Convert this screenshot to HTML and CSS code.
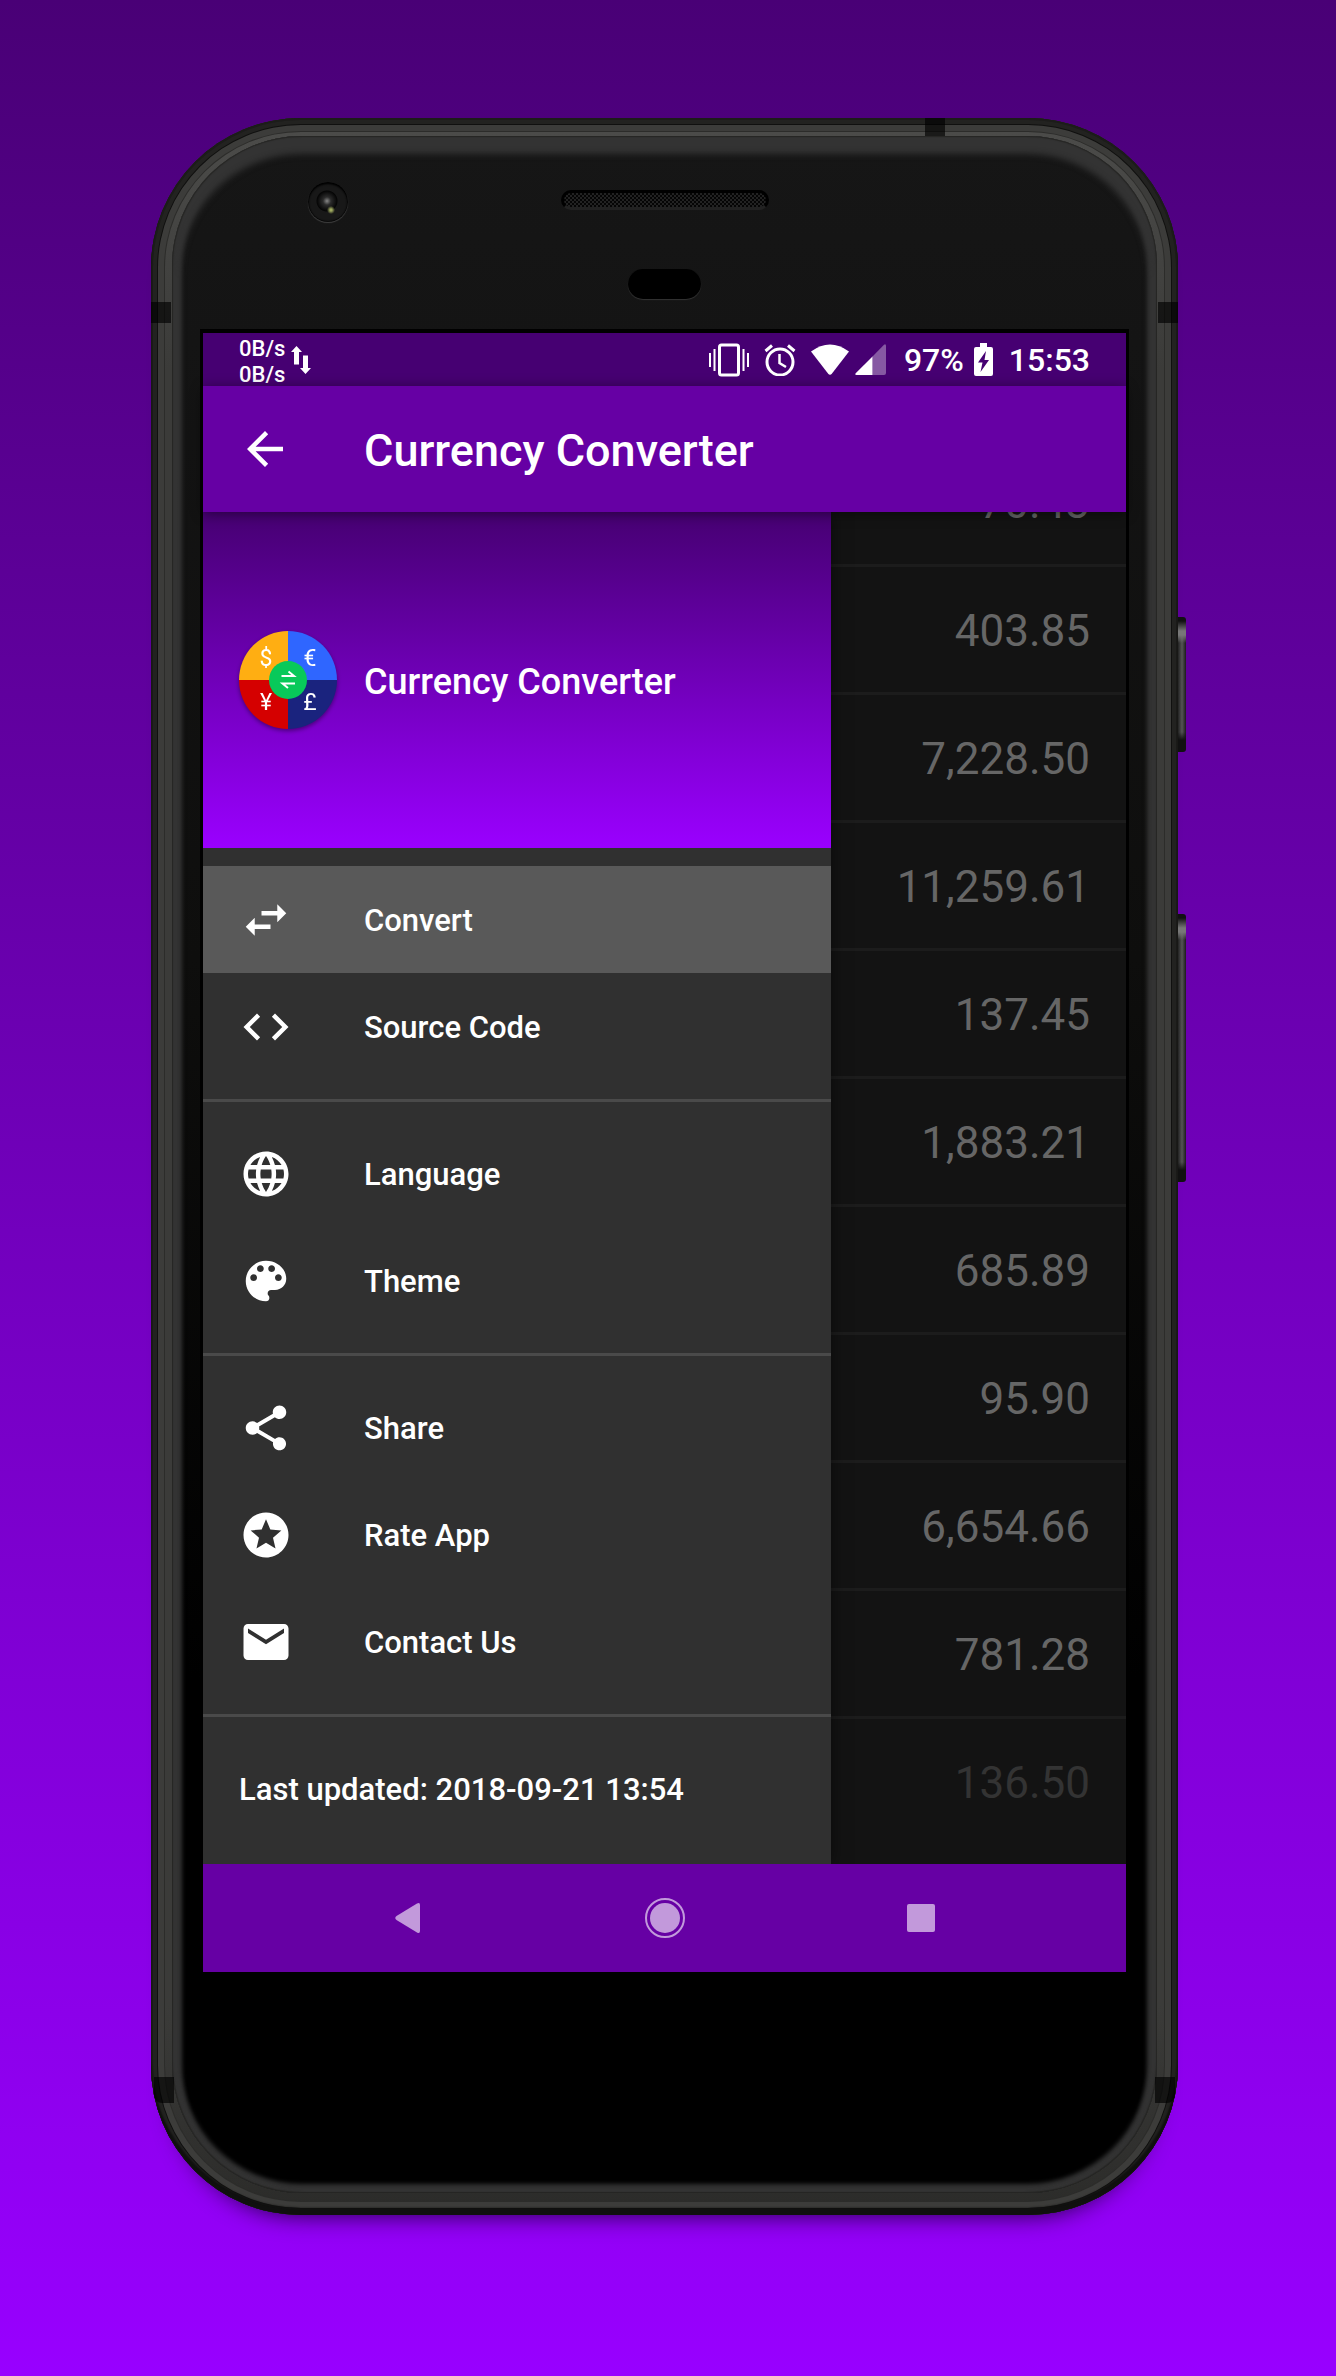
FILE: index.html
```html
<!DOCTYPE html>
<html lang="en">
<head>
<meta charset="utf-8">
<meta name="viewport" content="width=device-width, initial-scale=1">
<title>Currency Converter</title>
<link rel="stylesheet" href="styles.css">
</head>
<body>
<div class="phone">
  <span class="side-key side-key-power"></span>
  <span class="side-key side-key-volume"></span>
  <span class="band band-top"></span>
  <span class="band band-left"></span>
  <span class="band band-right"></span>
  <span class="band band-left band-low"></span>
  <span class="band band-right band-low"></span>
  <div class="face">
    <div class="hardware">
      <span class="camera"></span>
      <span class="speaker"></span>
      <span class="sensor"></span>
    </div>
    <div class="screen">
      <div class="status-bar">
        <div class="traffic">
          <div class="traffic-rates"><span>0B/s</span><span>0B/s</span></div>
          <svg class="traffic-arrows" viewBox="0 0 20 28" aria-hidden="true"><path d="M5.500 0 11 6H8v12.500H3V6H0zM14.500 28 9 22h3V9.500h5V22h3z"/></svg>
        </div>
        <div class="status-icons">
          <svg class="icon-vibrate" viewBox="0 0 40 34" aria-hidden="true"><path d="M1 10v14M5.500 6v22M34.500 6v22M39 10v14" stroke-width="2"/><rect x="10.500" y="2" width="19" height="30" rx="2" stroke-width="3"/></svg>
          <svg class="icon-alarm" viewBox="0 0 32 32" aria-hidden="true"><circle cx="16" cy="18" r="13" stroke-width="3"/><path d="M15.500 10v9l6.500 4" stroke-width="2.500"/><path d="M1.500 7 8 1.500M30.500 7 24 1.500" stroke-width="3"/></svg>
          <svg class="icon-wifi" viewBox="0 0 38 31" aria-hidden="true"><path d="M0 7.500Q19-6.500 38 7.500L21 29.500q-2 2.500-4 0z"/></svg>
          <svg class="icon-signal" viewBox="0 0 31 31" aria-hidden="true"><path d="M29 .700Q31-.500 31 2v27q0 2-2 2H17.500V12.500z" opacity=".35"/><path d="M17.500 12.500V31H1.500Q-.500 31 .700 29.300z"/></svg>
          <span class="battery-level">97%</span>
          <svg class="icon-battery" viewBox="0 0 19 33" aria-hidden="true"><path fill-rule="evenodd" d="M6 0h7v4h4q2 0 2 2v25q0 2-2 2H2q-2 0-2-2V6q0-2 2-2h4zM12 8 4 19.500h4.500L6.500 29 15 17h-4.500z"/></svg>
          <span class="clock">15:53</span>
        </div>
      </div>
      <header class="toolbar">
        <button class="back" type="button" aria-label="Back"><svg class="icon" viewBox="0 0 24 24" aria-hidden="true"><path d="M20 11H7.830l5.590-5.590L12 4l-8 8 8 8 1.410-1.410L7.830 13H20v-2z"/></svg></button>
        <h1 class="title">Currency Converter</h1>
      </header>
      <div class="content">
        <nav class="drawer">
          <div class="drawer-header">
            <svg class="logo" viewBox="0 0 100 100" aria-hidden="true">
              <path d="M50 50V1A49 49 0 0 0 1 50z" fill="#ffae12"/>
              <path d="M50 50V1A49 49 0 0 1 99 50z" fill="#2f66ff"/>
              <path d="M50 50V99A49 49 0 0 1 1 50z" fill="#d50000"/>
              <path d="M50 50V99A49 49 0 0 0 99 50z" fill="#1a237e"/>
              <g class="logo-symbols"><text x="28" y="36">$</text><text x="72" y="36">€</text><text x="28" y="80">¥</text><text x="72" y="80">£</text></g>
              <circle cx="50" cy="50" r="19" fill="#08c95a"/>
              <path d="M43.500 46h12.500l-5.500-4.500M57 53.500H44.500l5.500 4.500" fill="none" stroke="#fff" stroke-width="2"/>
            </svg>
            <span class="drawer-title">Currency Converter</span>
          </div>
          <ul class="menu">
            <li><a class="menu-item menu-item-active" href="#convert"><svg class="icon" viewBox="0 0 24 24" aria-hidden="true"><path d="M6.990 11L3 15l3.990 4v-3H14v-2H6.990v-3zM21 9l-3.990-4v3H10v2h7.010v3L21 9z"/></svg><span class="label">Convert</span></a></li>
            <li><a class="menu-item" href="#source"><svg class="icon" viewBox="0 0 24 24" aria-hidden="true"><path d="M9.400 16.600L4.800 12l4.600-4.600L8 6l-6 6 6 6 1.400-1.400zm5.200 0l4.600-4.600-4.600-4.600L16 6l6 6-6 6-1.400-1.400z"/></svg><span class="label">Source Code</span></a></li>
          </ul>
          <ul class="menu">
            <li><a class="menu-item" href="#language"><svg class="icon" viewBox="0 0 24 24" aria-hidden="true"><path d="M11.990 2C6.470 2 2 6.480 2 12s4.470 10 9.990 10C17.520 22 22 17.520 22 12S17.520 2 11.990 2zm6.930 6h-2.950c-.320-1.250-.780-2.450-1.380-3.560 1.840.630 3.370 1.910 4.330 3.560zM12 4.040c.830 1.200 1.480 2.530 1.910 3.960h-3.820c.430-1.430 1.080-2.760 1.910-3.960zM4.260 14C4.100 13.360 4 12.690 4 12s.100-1.360.260-2h3.380c-.080.660-.140 1.320-.140 2 0 .680.060 1.340.140 2H4.260zm.820 2h2.950c.320 1.250.780 2.450 1.380 3.560-1.840-.630-3.370-1.900-4.330-3.560zm2.950-8H5.080c.960-1.660 2.490-2.930 4.330-3.560C8.810 5.550 8.350 6.750 8.030 8zM12 19.960c-.830-1.200-1.480-2.530-1.910-3.960h3.820c-.430 1.430-1.080 2.760-1.910 3.960zM14.340 14H9.660c-.090-.660-.160-1.320-.160-2 0-.680.070-1.350.160-2h4.680c.090.650.160 1.320.160 2 0 .680-.070 1.340-.160 2zm.250 5.560c.600-1.110 1.060-2.310 1.380-3.560h2.950c-.960 1.650-2.490 2.930-4.330 3.560zM16.360 14c.080-.660.140-1.320.140-2 0-.680-.060-1.340-.140-2h3.380c.160.640.260 1.310.260 2s-.100 1.360-.260 2h-3.380z"/></svg><span class="label">Language</span></a></li>
            <li><a class="menu-item" href="#theme"><svg class="icon" viewBox="0 0 24 24" aria-hidden="true"><path d="M12 3c-4.970 0-9 4.030-9 9s4.030 9 9 9c.830 0 1.500-.670 1.500-1.500 0-.390-.150-.740-.390-1.010-.230-.260-.380-.610-.380-.990 0-.830.670-1.500 1.500-1.500H16c2.760 0 5-2.240 5-5 0-4.420-4.030-8-9-8zm-5.500 9c-.830 0-1.500-.670-1.500-1.500S5.670 9 6.500 9 8 9.670 8 10.500 7.330 12 6.500 12zm3-4C8.670 8 8 7.330 8 6.500S8.670 5 9.500 5s1.500.670 1.500 1.500S10.330 8 9.500 8zm5 0c-.830 0-1.500-.670-1.500-1.500S13.670 5 14.500 5s1.500.670 1.500 1.500S15.330 8 14.500 8zm3 4c-.830 0-1.500-.670-1.500-1.500S16.670 9 17.500 9s1.500.670 1.500 1.500-.670 1.500-1.500 1.500z"/></svg><span class="label">Theme</span></a></li>
          </ul>
          <ul class="menu">
            <li><a class="menu-item" href="#share"><svg class="icon" viewBox="0 0 24 24" aria-hidden="true"><path d="M18 16.080c-.760 0-1.440.300-1.960.770L8.910 12.700c.050-.230.090-.460.090-.700s-.040-.470-.090-.700l7.050-4.110c.540.500 1.250.810 2.040.810 1.660 0 3-1.340 3-3s-1.340-3-3-3-3 1.340-3 3c0 .240.040.470.090.700L8.040 9.810C7.500 9.310 6.790 9 6 9c-1.660 0-3 1.340-3 3s1.340 3 3 3c.790 0 1.500-.310 2.040-.810l7.120 4.160c-.050.210-.080.430-.080.650 0 1.610 1.310 2.920 2.920 2.920 1.610 0 2.920-1.310 2.920-2.920s-1.310-2.920-2.920-2.920z"/></svg><span class="label">Share</span></a></li>
            <li><a class="menu-item" href="#rate"><svg class="icon" viewBox="0 0 24 24" aria-hidden="true"><path d="M11.990 2C6.470 2 2 6.480 2 12s4.470 10 9.990 10C17.520 22 22 17.520 22 12S17.520 2 11.990 2zm4.240 16L12 15.450 7.770 18l1.120-4.810-3.730-3.230 4.920-.420L12 5l1.920 4.530 4.920.420-3.730 3.230L16.230 18z"/></svg><span class="label">Rate App</span></a></li>
            <li><a class="menu-item" href="#contact"><svg class="icon" viewBox="0 0 24 24" aria-hidden="true"><path d="M20 4H4c-1.100 0-1.990.900-1.990 2L2 18c0 1.100.900 2 2 2h16c1.100 0 2-.900 2-2V6c0-1.100-.900-2-2-2zm0 4l-8 5-8-5V6l8 5 8-5v2z"/></svg><span class="label">Contact Us</span></a></li>
          </ul>
          <p class="updated">Last updated: 2018-09-21 13:54</p>
        </nav>
        <ul class="amounts">
          <li>70.43</li>
          <li>403.85</li>
          <li>7,228.50</li>
          <li>11,259.61</li>
          <li>137.45</li>
          <li>1,883.21</li>
          <li>685.89</li>
          <li>95.90</li>
          <li>6,654.66</li>
          <li>781.28</li>
          <li class="amount-faded">136.50</li>
        </ul>
      </div>
      <div class="nav-bar">
        <button type="button" aria-label="Back"><svg viewBox="0 0 40 40" aria-hidden="true"><path d="M7.500 22Q5 20 7.500 18L28 5.500Q31 4 31 7v26q0 3-3 1.500z"/></svg></button>
        <button type="button" aria-label="Home"><svg viewBox="0 0 40 40" aria-hidden="true"><circle cx="20" cy="20" r="15"/><circle cx="20" cy="20" r="19" fill="none" stroke="#c299db" stroke-width="2"/></svg></button>
        <button type="button" aria-label="Recent apps"><svg viewBox="0 0 40 40" aria-hidden="true"><rect x="6" y="6" width="28" height="28" rx="2"/></svg></button>
      </div>
    </div>
  </div>
</div>
</body>
</html>
```
FILE: styles.css
```css
* {
  box-sizing: border-box;
}

body {
  margin: 0;
  min-height: 100vh;
  padding: 118px 158px 161px 151px;
  background: linear-gradient(#490076, #9800ff);
  color: #fff;
  font-family: Roboto, "Liberation Sans", sans-serif;
  font-weight: 500;
}

ul,
p,
h1 {
  margin: 0;
  padding: 0;
  list-style: none;
}

button {
  display: flex;
  align-items: center;
  justify-content: center;
  padding: 0;
  border: 0;
  background: none;
  color: inherit;
}

svg {
  display: block;
  flex: none;
  fill: currentColor;
}

/* Phone body */
.phone {
  position: relative;
  padding: 18px 21px 22px;
  border-radius: 150px;
  background: linear-gradient(#4c4c4a, #3b3b39 12%, #3b3b39 90%, #2b2b29);
  box-shadow:
    inset 0 -7px 2px #10100f,
    inset 0 0 0 2px #1c1c1a,
    inset 0 0 0 6px #222220,
    inset 0 0 0 7px #10100f,
    inset 0 0 0 13px #3c3c3a,
    inset 0 0 0 14px #2c2c2a,
    0 24px 24px -24px #200040;
}

.face {
  padding: 0 28px 218px;
  border-radius: 130px;
  background: linear-gradient(#161616, #141414 10%, #0e0e0d 40%, #000 75%);
  box-shadow:
    inset 0 0 1px 1px #252523,
    inset 0 10px 6px 8px #333,
    inset 0 0 4px 9px #333;
}

.hardware {
  position: relative;
  display: flex;
  flex-direction: column;
  align-items: center;
  gap: 59px;
  height: 193px;
  padding-top: 54px;
}

.camera {
  position: absolute;
  top: 46px;
  left: 108px;
  width: 40px;
  height: 40px;
  border-radius: 50%;
  background:
    radial-gradient(circle at 23px 28px, #a0ab60 0 1px, transparent 4px),
    radial-gradient(circle at 19px 19px, #888 0, #2b2b2b 4px, #050505 10px, transparent 11px),
    #181818;
  box-shadow: inset 0 2px 2px #000, inset 0 0 1px 1px #0a0a0a, 0 1px 1px #404040;
}

.speaker {
  width: 208px;
  height: 20px;
  border: 3px solid #000;
  border-bottom-color: #222;
  border-radius: 10px;
  background: repeating-conic-gradient(#050505 0 25%, #222 0 50%) 0 0 / 4px 4px;
}

.sensor {
  width: 73px;
  height: 30px;
  border-radius: 15px;
  background: #000;
  box-shadow: 0 1px 1px #333;
}

.band {
  position: absolute;
  width: 20px;
  height: 21px;
  background: rgba(0, 0, 0, 0.65);
}

.band-top {
  top: 0;
  right: 233px;
  height: 18px;
}

.band-left {
  top: 184px;
  left: 0;
}

.band-right {
  top: 184px;
  right: 0;
}

.band-low {
  top: auto;
  bottom: 112px;
  height: 26px;
}

.band-left.band-low {
  border-radius: 0 0 0 8px;
  left: 3px;
}

.band-right.band-low {
  border-radius: 0 0 8px 0;
  right: 3px;
}

.side-key {
  position: absolute;
  left: 100%;
  width: 8px;
  border-radius: 0 3px 3px 0;
  background: linear-gradient(#111 4px, #777 14px, #777 18px, transparent 26px, transparent calc(100% - 20px), #111 calc(100% - 12px)), linear-gradient(90deg, #222, #555 50%, #1b1b1b);
}

.side-key-power {
  top: 499px;
  height: 135px;
}

.side-key-volume {
  top: 796px;
  height: 268px;
}

/* Screen */
.screen {
  border: 3px solid #000;
  border-top-width: 4px;
  background: #131313;
}

.status-bar {
  display: flex;
  align-items: center;
  justify-content: space-between;
  height: 53px;
  padding: 0 36px;
  background: #460072;
}

.traffic {
  display: flex;
  align-items: center;
  gap: 6px;
  font-size: 22px;
  line-height: 26px;
}

.traffic-rates {
  display: flex;
  flex-direction: column;
  padding-top: 4px;
}

.traffic-arrows {
  width: 20px;
  height: 28px;
}

.status-icons {
  display: flex;
  align-items: center;
  font-size: 32px;
  line-height: 36px;
}

.icon-vibrate,
.icon-alarm {
  fill: none;
  stroke: currentColor;
}

.icon-vibrate {
  width: 40px;
  height: 34px;
  margin-right: 15px;
}

.icon-alarm {
  width: 32px;
  height: 32px;
  margin-right: 15px;
}

.icon-wifi {
  width: 38px;
  height: 31px;
  margin-right: 6px;
}

.icon-signal {
  width: 31px;
  height: 31px;
  margin-right: 18px;
}

.icon-battery {
  width: 19px;
  height: 33px;
  margin: 0 16px 0 10px;
}

.toolbar {
  position: relative;
  z-index: 2;
  display: flex;
  align-items: center;
  gap: 72px;
  height: 126px;
  padding: 0 35px;
  background: #6600a4;
  box-shadow: 0 2px 12px rgba(0, 0, 0, 0.45);
}

.icon {
  width: 54px;
  height: 54px;
}

.title {
  padding-top: 4px;
  font-size: 45px;
  font-weight: 500;
  line-height: 54px;
}

.content {
  display: flex;
  overflow: hidden;
}

.drawer {
  position: relative;
  z-index: 1;
  flex: 0 0 68%;
  background: #303030;
  box-shadow: 0 0 16px rgba(0, 0, 0, 0.5);
}

.drawer-header {
  display: flex;
  align-items: center;
  gap: 26px;
  height: 336px;
  padding: 0 35px;
  background: linear-gradient(#460072, #9a00ff);
  font-size: 36px;
  line-height: 42px;
}

.drawer-title {
  padding-top: 4px;
}

.logo {
  width: 100px;
  height: 100px;
  filter: drop-shadow(0 2px 2px rgba(0, 0, 0, 0.4));
}

.logo-symbols {
  fill: #fff;
  font-size: 23px;
  font-weight: 400;
  text-anchor: middle;
}

.menu {
  padding: 18px 0 19px;
  border-bottom: 3px solid #4a4a4a;
}

.menu-item {
  display: flex;
  align-items: center;
  gap: 71px;
  height: 107px;
  padding: 0 36px;
  color: #fff;
  font-size: 31px;
  line-height: 38px;
  text-decoration: none;
}

.label {
  padding-top: 2px;
}

.menu-item-active {
  background: #595959;
}

.updated {
  padding: 54px 36px 55px;
  font-size: 31px;
  line-height: 38px;
}

.amounts {
  flex: 1;
  margin-top: -73px;
  color: #666;
  font-size: 44px;
  font-weight: 400;
  line-height: 121px;
  text-align: right;
}

.amounts li {
  padding: 4px 36px 0 0;
  border-bottom: 3px solid #1c1c1c;
}

.amounts .amount-faded {
  border-bottom: 0;
  color: #333;
}

.nav-bar {
  display: flex;
  justify-content: center;
  gap: 128px;
  height: 108px;
  background: #6600a4;
  color: #c299db;
}

.nav-bar button {
  width: 128px;
}

.nav-bar svg {
  width: 40px;
  height: 40px;
}
```
